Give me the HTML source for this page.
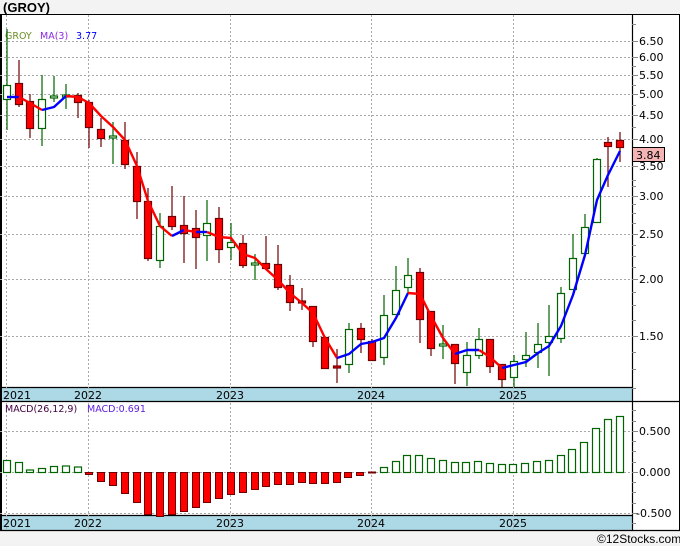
<!DOCTYPE html>
<html><head><meta charset="utf-8"><style>
html,body{margin:0;padding:0;background:#f3f3f3;width:680px;height:546px;overflow:hidden}
svg{display:block;font-family:"DejaVu Sans","Liberation Sans",sans-serif}
</style></head><body>
<svg width="680" height="546" viewBox="0 0 680 546" xmlns="http://www.w3.org/2000/svg">
<text x="3" y="12" font-family="Liberation Sans, sans-serif" font-weight="bold" font-size="13" fill="#000">(GROY)</text>
<rect x="0.5" y="14.5" width="679" height="516" fill="#fff" stroke="#000"/>
<!-- bands -->
<rect x="1" y="388" width="631" height="13" fill="#add8e6"/>
<rect x="1" y="516" width="631" height="14" fill="#add8e6"/>
<g stroke="#000" stroke-width="1.2">
<line x1="0" y1="387.5" x2="632" y2="387.5"/>
<line x1="0" y1="401.5" x2="680" y2="401.5"/>
<line x1="0" y1="515.5" x2="632" y2="515.5"/>
<line x1="0" y1="530.5" x2="680" y2="530.5"/>
<line x1="632.5" y1="14" x2="632.5" y2="531"/>
<line x1="1" y1="14" x2="1" y2="531" stroke-width="2"/>
</g>
<!-- grid -->
<g stroke="#aaa" stroke-dasharray="2,2" stroke-width="1">
<line x1="6.5" y1="15" x2="6.5" y2="530"/>
<line x1="88.5" y1="15" x2="88.5" y2="530"/>
<line x1="230.5" y1="15" x2="230.5" y2="530"/>
<line x1="371.5" y1="15" x2="371.5" y2="530"/>
<line x1="513.5" y1="15" x2="513.5" y2="530"/>
<line x1="0" y1="41.5" x2="632" y2="41.5"/>
<line x1="0" y1="57.5" x2="632" y2="57.5"/>
<line x1="0" y1="75.5" x2="632" y2="75.5"/>
<line x1="0" y1="94.5" x2="632" y2="94.5"/>
<line x1="0" y1="115.5" x2="632" y2="115.5"/>
<line x1="0" y1="139.5" x2="632" y2="139.5"/>
<line x1="0" y1="166.5" x2="632" y2="166.5"/>
<line x1="0" y1="196.5" x2="632" y2="196.5"/>
<line x1="0" y1="234.5" x2="632" y2="234.5"/>
<line x1="0" y1="279.5" x2="632" y2="279.5"/>
<line x1="0" y1="336.5" x2="632" y2="336.5"/>
<line x1="0" y1="431.5" x2="632" y2="431.5"/>
<line x1="0" y1="472.5" x2="632" y2="472.5"/>
<line x1="0" y1="513.5" x2="632" y2="513.5"/>
</g>
<!-- axis ticks -->
<g stroke="#888" stroke-width="1">
<path d="M632 41.5h6M632 57.5h6M632 75.5h6M632 94.5h6M632 115.5h6M632 139.5h6M632 166.5h6M632 196.5h6M632 234.5h6M632 279.5h6M632 336.5h6M632 127.5h4M632 152.5h4M632 180.5h4M632 186.5h4M632 204.5h4M632 213.5h4M632 223.5h4M632 245.5h4M632 256.5h4M632 267.5h4M632 292.5h4M632 305.5h4M632 320.5h4M632 352.5h4M632 369.5h4M632 388.5h4M632 24.5h4M632 105.5h4M632 85.5h4M632 66.5h4"/>
<path d="M632 431.5h6M632 472.5h6M632 513.5h6M632 410.5h4M632 421.5h4M632 441.5h4M632 451.5h4M632 462.5h4M632 482.5h4M632 492.5h4M632 503.5h4M632 523.5h4"/>
</g>
<g font-size="11" fill="#000">
<text x="639" y="45">6.50</text>
<text x="639" y="61">6.00</text>
<text x="639" y="79">5.50</text>
<text x="639" y="98">5.00</text>
<text x="639" y="119">4.50</text>
<text x="639" y="143">4.00</text>
<text x="639" y="170">3.50</text>
<text x="639" y="200">3.00</text>
<text x="639" y="238">2.50</text>
<text x="639" y="283">2.00</text>
<text x="639" y="340">1.50</text>
<text x="639" y="435">0.500</text>
<text x="639" y="476">0.000</text>
<text x="636" y="517">-0.500</text>
</g>
<rect x="632.5" y="147.5" width="32" height="14" fill="#f4b4b4" stroke="#000"/>
<text x="636" y="159" font-size="11">3.84</text>
<!-- year labels -->
<g font-size="11" fill="#000">
<text x="3" y="399">2021</text><text x="74" y="399">2022</text><text x="216" y="399">2023</text><text x="357" y="399">2024</text><text x="499" y="399">2025</text>
<text x="3" y="527">2021</text><text x="74" y="527">2022</text><text x="216" y="527">2023</text><text x="357" y="527">2024</text><text x="499" y="527">2025</text>
</g>
<text x="5" y="39" font-size="9.5" fill="#6b8e23">GROY</text>
<text x="40" y="39" font-size="9.5" fill="#8a2be2">MA(3)</text>
<text x="76" y="39" font-size="9.5" fill="#0000ff">3.77</text>
<text x="5" y="412" font-size="9.5" fill="#400040">MACD(26,12,9)</text>
<text x="87" y="412" font-size="9.5" fill="#6020e0">MACD:0.691</text>
<!-- candles -->
<g stroke-width="1.2">
<g stroke="#006400" fill="#fff">
<path d="M7 29V130M42 75V146M54 76V102M66 84V109M113 122V164M160 213V268M207 200V261M231 223V260M255 254V280M349 323V373M384 295V365M396 266V314M408 258V293M443 325V359M467 342V386M479 328V359M514 355V387M526 332V367M538 323V368M549 305V376M561 287V343M573 234V289M585 214V253M597 158V223"/>
<rect x="3.5" y="85.5" width="7" height="14"/><rect x="38.5" y="99.5" width="7" height="29"/><rect x="50.5" y="96" width="7" height="2"/><rect x="62.5" y="95" width="7" height="2"/><rect x="109.5" y="136" width="7" height="2"/><rect x="156.5" y="226.5" width="7" height="34"/><rect x="203.5" y="223.5" width="7" height="12"/><rect x="227.5" y="242.5" width="7" height="5"/><rect x="251.5" y="263" width="7" height="2"/><rect x="345.5" y="329.5" width="7" height="35"/><rect x="380.5" y="315.5" width="7" height="42"/><rect x="392.5" y="290.5" width="7" height="24"/><rect x="404.5" y="275.5" width="7" height="12"/><rect x="439.5" y="344" width="7" height="2"/><rect x="463.5" y="355.5" width="7" height="17"/><rect x="475.5" y="339.5" width="7" height="16"/><rect x="510.5" y="361.5" width="7" height="16"/><rect x="522.5" y="355.5" width="7" height="4"/><rect x="534.5" y="344.5" width="7" height="8"/><rect x="545.5" y="336.5" width="7" height="6"/><rect x="557.5" y="293.5" width="7" height="45"/><rect x="569.5" y="258.5" width="7" height="31"/><rect x="581.5" y="227.5" width="7" height="26"/><rect x="593.5" y="159.5" width="7" height="63"/>
</g>
<g stroke="#700000" fill="#f00">
<path d="M19 60V107M30 94V138M78 93V118M89 100V148M101 118V147M125 122V169M137 152V219M148 188V261M172 186V230M184 196V263M196 210V269M219 207V263M243 235V268M266 236V269M278 245V290M290 275V311M302 288V310M313 306V347M325 337V369M337 349V383M361 323V353M372 339V360M420 268V343M431 311V356M455 344V384M490 339V373M502 364V387M608 137V187M620 132V162"/>
<rect x="15.5" y="83.5" width="7" height="21"/><rect x="26.5" y="101.5" width="7" height="27"/><rect x="74.5" y="95.5" width="7" height="7"/><rect x="85.5" y="102.5" width="7" height="25"/><rect x="97.5" y="129.5" width="7" height="9"/><rect x="121.5" y="140.5" width="7" height="24"/><rect x="133.5" y="166.5" width="7" height="35"/><rect x="144.5" y="201.5" width="7" height="57"/><rect x="168.5" y="216.5" width="7" height="10"/><rect x="180.5" y="225.5" width="7" height="8"/><rect x="192.5" y="228.5" width="7" height="9"/><rect x="215.5" y="218.5" width="7" height="31"/><rect x="239.5" y="243.5" width="7" height="22"/><rect x="262.5" y="263.5" width="7" height="5"/><rect x="274.5" y="264.5" width="7" height="23"/><rect x="286.5" y="285.5" width="7" height="17"/><rect x="298.5" y="301" width="7" height="2"/><rect x="309.5" y="306.5" width="7" height="35"/><rect x="321.5" y="337.5" width="7" height="31"/><rect x="333.5" y="366" width="7" height="2"/><rect x="357.5" y="328.5" width="7" height="11"/><rect x="368.5" y="341.5" width="7" height="19"/><rect x="416.5" y="272.5" width="7" height="47"/><rect x="427.5" y="311.5" width="7" height="37"/><rect x="451.5" y="344.5" width="7" height="19"/><rect x="486.5" y="339.5" width="7" height="27"/><rect x="498.5" y="364.5" width="7" height="15"/><rect x="604.5" y="142.5" width="7" height="4"/><rect x="616.5" y="140.5" width="7" height="7"/>
</g>
</g>
<!-- MA -->
<g fill="none" stroke-width="2.4" stroke-linejoin="round">
<polyline stroke="#0000ff" points="7,97 19,97"/>
<polyline stroke="#ff0000" points="19,97 30,103 42,110"/>
<polyline stroke="#0000ff" points="42,110 54,107 66,96"/>
<polyline stroke="#ff0000" points="66,96 78,97 89,103 101,116 113,127 125,140 137,166 148,201 160,226 172,236"/>
<polyline stroke="#0000ff" points="172,236 184,230"/>
<polyline stroke="#ff0000" points="184,230 196,232"/>
<polyline stroke="#0000ff" points="196,232 207,232"/>
<polyline stroke="#ff0000" points="207,232 219,237 231,238 243,254 255,258 266,269 278,280 290,293 302,303 313,313 325,338 337,358"/>
<polyline stroke="#0000ff" points="337,358 349,354 361,344 372,342 384,338 396,318 408,293"/>
<polyline stroke="#ff0000" points="408,293 420,294 431,316 443,338 455,354"/>
<polyline stroke="#0000ff" points="455,354 467,350 479,350"/>
<polyline stroke="#ff0000" points="479,350 490,357 502,368"/>
<polyline stroke="#0000ff" points="502,368 514,365 526,362 538,353 549,346 561,326 573,295 585,255 597,200 608,175 620,151"/>
</g>
<!-- MACD -->
<g stroke="#006400" fill="#fff" stroke-width="1.2">
<rect x="3.5" y="460.5" width="7" height="12"/><rect x="15.5" y="462.5" width="7" height="10"/><rect x="26.5" y="470" width="7" height="2.5"/><rect x="38.5" y="468.5" width="7" height="4"/><rect x="50.5" y="466.5" width="7" height="6"/><rect x="62.5" y="466" width="7" height="6.5"/><rect x="74.5" y="467" width="7" height="5.5"/>
<rect x="380.5" y="467.5" width="7" height="5"/><rect x="392.5" y="461.5" width="7" height="11"/><rect x="403.5" y="455.5" width="7" height="17"/><rect x="415.5" y="455.5" width="7" height="17"/><rect x="427.5" y="458.5" width="7" height="14"/><rect x="439.5" y="460.5" width="7" height="12"/><rect x="451.5" y="462.5" width="7" height="10"/><rect x="462.5" y="462.5" width="7" height="10"/><rect x="474.5" y="461.5" width="7" height="11"/><rect x="486.5" y="463.5" width="7" height="9"/><rect x="498.5" y="464.5" width="7" height="8"/><rect x="509.5" y="464.5" width="7" height="8"/><rect x="521.5" y="463.5" width="7" height="9"/><rect x="533.5" y="461.5" width="7" height="11"/><rect x="545.5" y="460.5" width="7" height="12"/><rect x="557.5" y="455.5" width="7" height="17"/><rect x="568.5" y="449.5" width="7" height="23"/><rect x="580.5" y="442.5" width="7" height="30"/><rect x="592.5" y="428.5" width="7" height="44"/><rect x="604.5" y="419.5" width="7" height="53"/><rect x="616.5" y="416.5" width="7" height="56"/>
</g>
<g stroke="#700000" fill="#f00" stroke-width="1">
<rect x="85.5" y="472.5" width="7" height="2"/><rect x="97.5" y="472.5" width="7" height="9"/><rect x="109.5" y="472.5" width="7" height="13"/><rect x="121.5" y="472.5" width="7" height="21"/><rect x="133.5" y="472.5" width="7" height="30"/><rect x="144.5" y="472.5" width="7" height="42"/><rect x="156.5" y="472.5" width="7" height="44"/><rect x="168.5" y="472.5" width="7" height="42"/><rect x="180.5" y="472.5" width="7" height="39"/><rect x="192.5" y="472.5" width="7" height="35"/><rect x="203.5" y="472.5" width="7" height="30"/><rect x="215.5" y="472.5" width="7" height="26"/><rect x="227.5" y="472.5" width="7" height="22"/><rect x="239.5" y="472.5" width="7" height="20"/><rect x="251.5" y="472.5" width="7" height="17"/><rect x="262.5" y="472.5" width="7" height="14"/><rect x="274.5" y="472.5" width="7" height="12"/><rect x="286.5" y="472.5" width="7" height="12"/><rect x="298.5" y="472.5" width="7" height="10"/><rect x="309.5" y="472.5" width="7" height="11"/><rect x="321.5" y="472.5" width="7" height="11"/><rect x="333.5" y="472.5" width="7" height="10"/><rect x="344.5" y="472.5" width="7" height="5"/><rect x="356.5" y="472.5" width="7" height="3"/><rect x="368.5" y="472" width="7" height="1"/>
</g>
<text x="597" y="543" font-family="Liberation Sans, sans-serif" font-size="12" fill="#000">©12Stocks.com</text>
</svg>
</body></html>
